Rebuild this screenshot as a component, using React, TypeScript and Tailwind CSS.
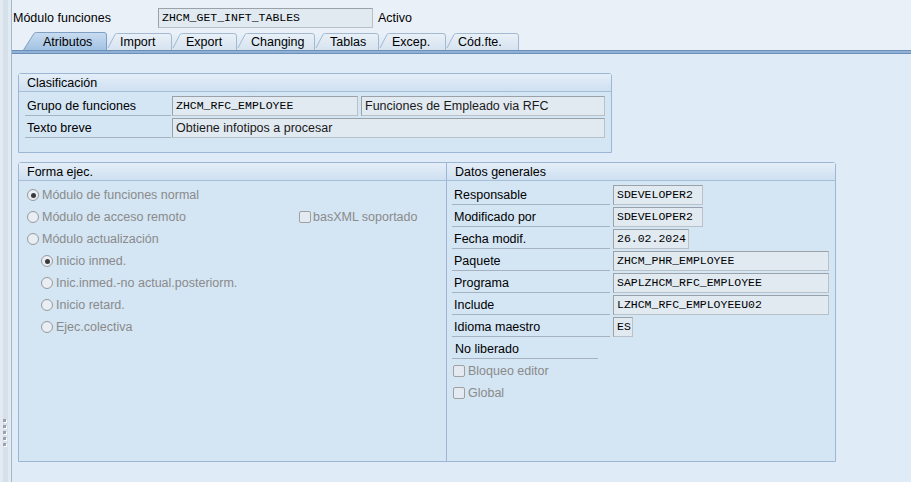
import React from "react";

type TabDef = { label: string; w: number; pl: number; active?: boolean };

const TABS: TabDef[] = [
  { label: "Atributos", w: 84, pl: 20, active: true },
  { label: "Import", w: 65, pl: 13 },
  { label: "Export", w: 65, pl: 14 },
  { label: "Changing", w: 78, pl: 14 },
  { label: "Tablas", w: 64, pl: 15 },
  { label: "Excep.", w: 67, pl: 13 },
  { label: "Cód.fte.", w: 73, pl: 12 }
];

function Tab({ tab }: { tab: TabDef }): React.ReactElement {
  const h = tab.active ? 18 : 17;
  const w = tab.w;
  return (
    <div className="relative shrink-0" style={{ width: w, height: h }}>
      <svg className="absolute inset-0" width={w} height={h}>
        <defs>
          <linearGradient id={`g-${tab.label}`} x1="0" y1="0" x2="0" y2="1">
            <stop offset="0" stopColor={tab.active ? "#c9dcf0" : "#eaf1f8"} />
            <stop offset="1" stopColor={tab.active ? "#a2c2e3" : "#d6e3f0"} />
          </linearGradient>
        </defs>
        {tab.active ? (
          <path
            d={`M0.5 ${h} L11 1.5 Q12 0.5 13.5 0.5 L${w - 3} 0.5 Q${w - 0.5} 0.5 ${w - 0.5} 3 L${w - 0.5} ${h}`}
            fill={`url(#g-${tab.label})`}
            stroke="#7f9fc4"
          />
        ) : (
          <>
            <rect x="0" y="0" width={w} height={h} fill={`url(#g-${tab.label})`} />
            <path
              d={`M1 ${h - 2} L8 1.5 Q9 0.5 10.5 0.5 L${w - 3} 0.5 Q${w - 0.5} 0.5 ${w - 0.5} 3 L${w - 0.5} ${h}`}
              fill="none"
              stroke="#a3b9d2"
            />
          </>
        )}
      </svg>
      <span
        className={
          "relative block leading-[17px] text-black " + (tab.active ? "pt-[2px]" : "pt-[1px]")
        }
        style={{ paddingLeft: tab.pl }}
      >
        {tab.label}
      </span>
    </div>
  );
}

function Field({
  value,
  w,
  mono = true
}: {
  value: string;
  w: number;
  mono?: boolean;
}): React.ReactElement {
  return (
    <div
      className={
        "h-[20px] shrink-0 overflow-hidden whitespace-nowrap border border-t-[#9aa1a8] border-l-[#9aa1a8] border-r-[#b9c0c7] border-b-[#b9c0c7] bg-[#e1e9f1] pl-[3px] leading-[18px] " +
        (mono
          ? "font-['Liberation_Mono','Courier_New',monospace] text-[11.5px] text-black"
          : "text-[#1a1a1a]")
      }
      style={{ width: w }}
    >
      {value}
    </div>
  );
}

function Radio({ checked }: { checked?: boolean }): React.ReactElement {
  return (
    <span className="flex h-[12px] w-[12px] shrink-0 items-center justify-center rounded-full border border-[#999999] bg-[#e8eef4]">
      {checked && <span className="h-[5px] w-[5px] rounded-full bg-[#3a3a3a]" />}
    </span>
  );
}

function Check(): React.ReactElement {
  return (
    <span className="h-[12px] w-[12px] shrink-0 rounded-[2px] border border-[#a0a0a0] bg-[#e3eaf1]" />
  );
}

function PanelHeader({ title }: { title: string }): React.ReactElement {
  return (
    <div className="h-[18px] border-b border-[#a7bed8] bg-gradient-to-b from-[#e4eef8] to-[#cfe0f1] pl-2 leading-[18px] text-black">
      {title}
    </div>
  );
}

const RADIOS: { label: string; indent?: boolean; checked?: boolean }[] = [
  { label: "Módulo de funciones normal", checked: true },
  { label: "Módulo de acceso remoto" },
  { label: "Módulo actualización" },
  { label: "Inicio inmed.", indent: true, checked: true },
  { label: "Inic.inmed.-no actual.posteriorm.", indent: true },
  { label: "Inicio retard.", indent: true },
  { label: "Ejec.colectiva", indent: true }
];

const DATOS: { label: string; value: string; w: number }[] = [
  { label: "Responsable", value: "SDEVELOPER2", w: 90 },
  { label: "Modificado por", value: "SDEVELOPER2", w: 90 },
  { label: "Fecha modif.", value: "26.02.2024", w: 76 },
  { label: "Paquete", value: "ZHCM_PHR_EMPLOYEE", w: 216 },
  { label: "Programa", value: "SAPLZHCM_RFC_EMPLOYEE", w: 216 },
  { label: "Include", value: "LZHCM_RFC_EMPLOYEEU02", w: 216 },
  { label: "Idioma maestro", value: "ES", w: 20 }
];

export default function App(): React.ReactElement {
  return (
    <div className="flex h-[482px] w-[911px] overflow-hidden bg-[#e9f0f8] font-['Liberation_Sans',Arial,sans-serif] text-[12.5px]">
      {/* splitter strip */}
      <div className="flex w-[11px] shrink-0 bg-[#e3eaf1]">
        <div className="ml-[3px] flex w-[5px] flex-col bg-[#d6e0ea] pt-[419px]">
          {[0, 1, 2, 3, 4].map((i) => (
            <span
              key={i}
              className="mb-[3px] h-[3px] w-[3px] bg-[#9aa2ab] shadow-[1px_1px_0_#ffffff]"
            />
          ))}
        </div>
      </div>

      <div className="flex min-w-0 flex-1 flex-col border-l border-[#a3b8cf]">
        {/* top row */}
        <div className="flex h-[31px] shrink-0 items-start pt-[8px]">
          <span className="ml-[1px] w-[145px] leading-[21px] text-black">Módulo funciones</span>
          <Field value="ZHCM_GET_INFT_TABLES" w={215} />
          <span className="ml-[5px] leading-[21px] text-black">Activo</span>
        </div>

        {/* tabs */}
        <div className="flex h-[19px] shrink-0 items-end pl-[11px]">
          {TABS.map((t) => (
            <Tab key={t.label} tab={t} />
          ))}
        </div>
        <div className="h-[4px] shrink-0 border-y border-[#6d8fb6] bg-[#8fb1d8]" />

        {/* content */}
        <div className="flex-1 bg-[#dfebf6] pl-[6px] pt-[19px]">
          {/* Clasificación */}
          <section className="h-[80px] w-[594px] rounded-t-[3px] border border-[#9cb6d3] bg-[#d4e5f4]">
            <PanelHeader title="Clasificación" />
            <div className="flex flex-col pl-[6px] pt-[3px]">
              <div className="flex h-[22px] items-center">
                <span className="h-[20px] w-[146px] border-b border-[#a6b2bf] pl-[2px] leading-[20px] text-black">
                  Grupo de funciones
                </span>
                <span className="ml-[1px]">
                  <Field value="ZHCM_RFC_EMPLOYEE" w={186} />
                </span>
                <span className="ml-[3px]">
                  <Field value="Funciones de Empleado via RFC" w={244} mono={false} />
                </span>
              </div>
              <div className="flex h-[22px] items-center">
                <span className="h-[20px] w-[146px] border-b border-[#a6b2bf] pl-[2px] leading-[20px] text-black">
                  Texto breve
                </span>
                <span className="ml-[1px]">
                  <Field value="Obtiene infotipos a procesar" w={433} mono={false} />
                </span>
              </div>
            </div>
          </section>

          <div className="mt-[9px] flex">
            {/* Forma ejec. */}
            <section className="h-[300px] w-[429px] rounded-tl-[3px] border border-[#9cb6d3] bg-[#d4e5f4]">
              <PanelHeader title="Forma ejec." />
              <div className="flex flex-col pl-[8px] pt-[3px]">
                {RADIOS.map((r, i) => (
                  <div
                    key={r.label}
                    className={"flex h-[22px] items-center " + (r.indent ? "pl-[14px]" : "")}
                  >
                    <div className={"flex items-center gap-[3px] " + (i === 1 ? "w-[272px]" : "")}>
                      <Radio checked={r.checked} />
                      <span className="text-[#8a8a8a]">{r.label}</span>
                    </div>
                    {i === 1 && (
                      <div className="flex items-center gap-[2px]">
                        <Check />
                        <span className="text-[#8a8a8a]">basXML soportado</span>
                      </div>
                    )}
                  </div>
                ))}
              </div>
            </section>

            {/* Datos generales */}
            <section className="-ml-px h-[300px] w-[390px] rounded-tr-[3px] border border-[#9cb6d3] bg-[#d4e5f4]">
              <PanelHeader title="Datos generales" />
              <div className="flex flex-col pl-[5px] pt-[3px]">
                {DATOS.map((d) => (
                  <div key={d.label} className="flex h-[22px] items-center">
                    <span className="h-[20px] w-[158px] border-b border-[#a6b2bf] pl-[2px] leading-[20px] text-black">
                      {d.label}
                    </span>
                    <span className="ml-[3px]">
                      <Field value={d.value} w={d.w} />
                    </span>
                  </div>
                ))}
                <div className="flex h-[22px] items-center">
                  <span className="h-[20px] w-[146px] border-b border-[#a6b2bf] pl-[3px] leading-[20px] text-black">
                    No liberado
                  </span>
                </div>
                {["Bloqueo editor", "Global"].map((c) => (
                  <div key={c} className="flex h-[22px] items-center gap-[3px] pl-[1px]">
                    <Check />
                    <span className="text-[#8a8a8a]">{c}</span>
                  </div>
                ))}
              </div>
            </section>
          </div>
        </div>
      </div>
    </div>
  );
}
